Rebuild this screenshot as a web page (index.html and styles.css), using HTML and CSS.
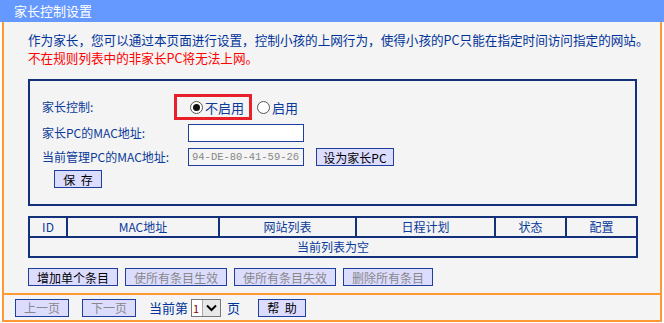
FILE: index.html
```html
<!DOCTYPE html>
<html lang="zh-CN">
<head>
	<meta charset="UTF-8">
	<title>家长控制设置</title>
	<link rel="stylesheet" href="styles.css">
</head>
<body>
	<div class="title">家长控制设置</div>
	<div class="frame">
		<div class="main">
			<p class="intro">作为家长，您可以通过本页面进行设置，控制小孩的上网行为，使得小孩的PC只能在指定时间访问指定的网站。</p>
			<p class="warn">不在规则列表中的非家长PC将无法上网。</p>

			<div class="formbox">
				<div class="row">
					<span class="lbl">家长控制:</span>
					<div class="radios">
						<label class="hl"><span class="radio on"></span>不启用</label>
						<label><span class="radio"></span>启用</label>
					</div>
				</div>
				<div class="row">
					<span class="lbl">家长PC的MAC地址:</span>
					<span class="input"></span>
				</div>
				<div class="row">
					<span class="lbl">当前管理PC的MAC地址:</span>
					<span class="input grey">94-DE-80-41-59-26</span>
					<span class="btn setpc">设为家长PC</span>
				</div>
				<div class="saverow">
					<span class="btn save">保 存</span>
				</div>
			</div>

			<table class="list">
				<tr>
					<th class="c-id">ID</th>
					<th class="c-mac">MAC地址</th>
					<th class="c-site">网站列表</th>
					<th class="c-plan">日程计划</th>
					<th class="c-st">状态</th>
					<th class="c-cfg">配置</th>
				</tr>
				<tr>
					<td colspan="6">当前列表为空</td>
				</tr>
			</table>

			<div class="actions">
				<span class="btn add">增加单个条目</span>
				<span class="btn off w1">使所有条目生效</span>
				<span class="btn off w1">使所有条目失效</span>
				<span class="btn off add">删除所有条目</span>
			</div>
		</div>
		<div class="footer">
			<span class="btn off page">上一页</span>
			<span class="btn off page">下一页</span>
			<span class="cur">当前第</span>
			<span class="select"><span class="num">1</span><span class="arrow"><svg width="11" height="8" viewBox="0 0 11 8"><path d="M1 1.5 L5.5 6 L10 1.5" fill="none" stroke="#000" stroke-width="2"/></svg></span></span>
			<span class="cur">页</span>
			<span class="btn help">帮 助</span>
		</div>
	</div>
</body>
</html>
```
FILE: styles.css
```css
* {
	margin: 0;
	padding: 0;
	box-sizing: border-box;
}
body {
	width: 664px;
	height: 323px;
	background: #fff;
	font-family: "Noto Sans CJK SC", "Liberation Sans", sans-serif;
	font-size: 12px;
	color: #0a3a9a;
	overflow: hidden;
}
.title {
	height: 22px;
	background: #6699ff;
	color: #fff;
	font-size: 13px;
	line-height: 22px;
	padding-left: 14px;
}
.frame {
	margin-left: 2px;
	width: 660px;
	height: 300px;
	background: #f4f4f4;
	border: 2px solid #ff9933;
	border-top: none;
}
.main {
	height: 273px;
	padding: 9px 0 0 24px;
	border-bottom: 2px solid #ff9933;
}
.intro {
	font-size: 12.6px;
	line-height: 18px;
	color: #003399;
	white-space: nowrap;
}
.warn {
	font-size: 12.6px;
	line-height: 18px;
	color: #ff0000;
	white-space: nowrap;
}
.formbox {
	margin-top: 12px;
	width: 609px;
	height: 127px;
	border: 2px solid #13307a;
	padding: 12px 0 0 12px;
}
.row {
	display: flex;
	align-items: center;
	height: 24px;
}
.row:first-child {
	height: 28px;
}
.lbl {
	width: 146px;
	line-height: 18px;
	white-space: nowrap;
}
.radios {
	display: flex;
	align-items: center;
}
.radios label {
	display: flex;
	align-items: center;
	font-size: 13px;
}
.radios .hl {
	width: 78px;
	height: 26px;
	border: 3px solid #e8202a;
	padding-left: 13px;
	margin-left: -14px;
	margin-right: 5px;
}
.radio {
	width: 13px;
	height: 13px;
	border-radius: 50%;
	border: 1px solid #555;
	background: #fff;
	margin-right: 2px;
	display: flex;
	align-items: center;
	justify-content: center;
}
.radio.on::after {
	content: "";
	width: 7px;
	height: 7px;
	border-radius: 50%;
	background: #111;
}
.input {
	width: 116px;
	height: 18px;
	background: #fff;
	border: 1px solid #1e3fa0;
}
.input.grey {
	background: #f4f4f4;
	color: #888;
	font-family: "Liberation Mono", monospace;
	font-size: 10.5px;
	line-height: 16px;
	padding-left: 3px;
	white-space: nowrap;
	overflow: hidden;
}
.btn {
	display: inline-flex;
	align-items: center;
	justify-content: center;
	height: 18px;
	background: #dcdcff;
	border: 1px solid #1e3fa0;
	color: #000;
	font-size: 12px;
	white-space: nowrap;
}
.btn.off {
	color: #888;
}
.setpc {
	width: 78px;
	margin-left: 12px;
}
.saverow {
	padding-left: 12px;
	padding-top: 1px;
}
.save {
	width: 48px;
	word-spacing: 3px;
}
.list {
	margin-top: 10px;
	width: 610px;
	border-collapse: collapse;
	border: 2px solid #13307a;
}
.list th, .list td {
	border: 2px solid #13307a;
	height: 20px;
	font-weight: normal;
	font-size: 12px;
	color: #0a3a9a;
	text-align: center;
	line-height: 16px;
}
.c-id { width: 38px; }
.c-mac { width: 152px; }
.c-site { width: 137px; }
.c-plan { width: 139px; }
.c-st { width: 71px; }
.actions {
	display: flex;
	gap: 7px;
	margin-top: 10px;
}
.add {
	width: 90px;
}
.w1 {
	width: 102px;
}
.footer {
	display: flex;
	align-items: center;
	height: 25px;
	padding-left: 11px;
}
.page {
	width: 54px;
	margin-right: 13px;
}
.cur {
	color: #003399;
	font-size: 13px;
}
.select {
	display: flex;
	width: 30px;
	height: 18px;
	border: 1px solid #777;
	background: #fff;
	margin: 0 6px 0 3px;
}
.num {
	width: 10px;
	font-size: 11px;
	color: #800;
	line-height: 16px;
	padding-left: 1px;
}
.arrow {
	flex: 1;
	display: flex;
	align-items: center;
	justify-content: center;
	background: #e8e8e8;
	border-left: 1px solid #aaa;
}
.help {
	width: 48px;
	margin-left: 18px;
	word-spacing: 3px;
}
```
